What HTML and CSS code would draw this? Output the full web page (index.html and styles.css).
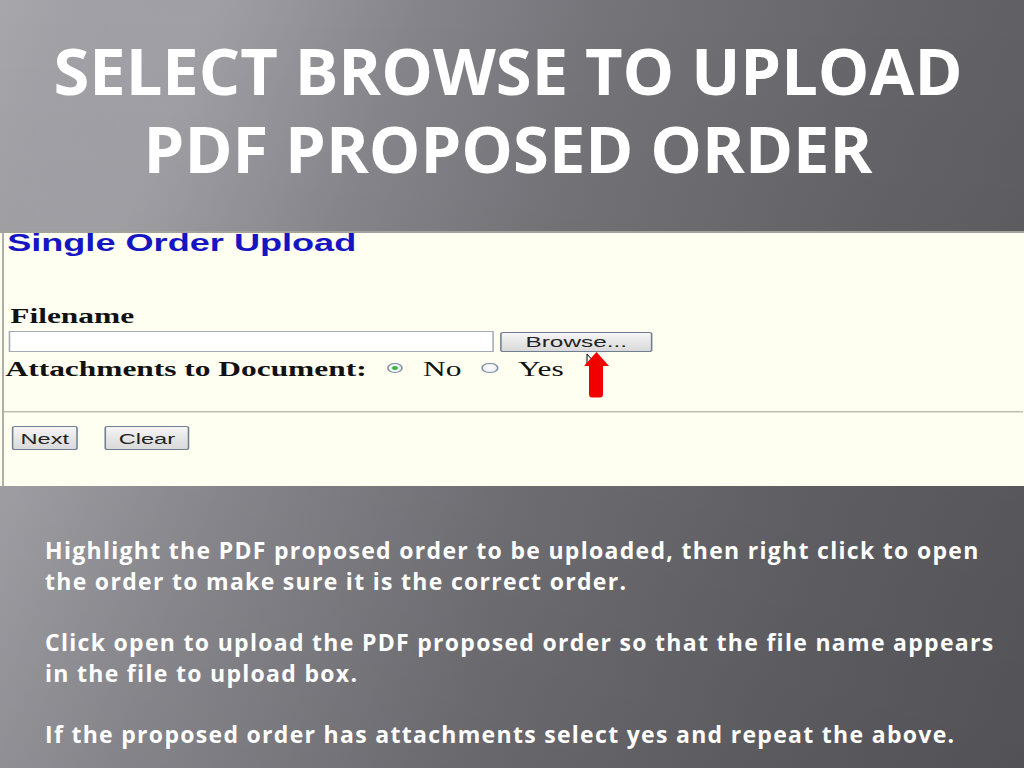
FILE: index.html
```html
<!DOCTYPE html>
<html lang="en">
<head>
<meta charset="utf-8">
<title>Select Browse to Upload PDF Proposed Order</title>
<link rel="stylesheet" href="styles.css">
</head>
<body>
<div class="slide">
  <h1 class="title"><span class="title-line">SELECT BROWSE TO UPLOAD</span><span class="title-line">PDF PROPOSED ORDER</span></h1>

  <div class="panel">
    <div class="shot">
      <div class="shot-content">
        <h2 class="form-title">Single Order Upload</h2>
        <div class="field-label">Filename</div>
        <div class="file-row"><span class="file-input"></span><span class="btn btn-browse">Browse...</span></div>
        <div class="attach-row"><span class="attach-label">Attachments to Document:</span><span class="radio radio-on"></span><span class="opt">No</span><span class="radio"></span><span class="opt">Yes</span></div>
        <div class="rule"></div>
        <div class="btn-row"><span class="btn btn-next">Next</span><span class="btn btn-clear">Clear</span></div>
      </div>
    </div>
    <svg class="cursor" width="9" height="15" viewBox="0 0 9 15"><path d="M1 1 L1 13 L4 10 L6 14 L7.5 13.3 L5.5 9.5 L8.5 9.5 Z" fill="#fff" stroke="#000" stroke-width="1"/></svg>
    <svg class="red-arrow" width="26" height="46" viewBox="0 0 26 46"><path d="M12.5 0 L25 14 L19 14 L19 42 Q19 45.5 16 45.5 L8 45.5 Q5 45.5 5 42 L5 14 L0 14 Z" fill="#f20000"/></svg>
  </div>

  <div class="notes">
    <p>Highlight the PDF proposed order to be uploaded, then right click to open the order to make sure it is the correct order.</p>
    <p>Click open to upload the PDF proposed order so that the file name appears in the file to upload box.</p>
    <p>If the proposed order has attachments select yes and repeat the above.</p>
  </div>
</div>
</body>
</html>
```
FILE: styles.css
```css
html, body {
  margin: 0;
  padding: 0;
}
body {
  width: 1024px;
  height: 768px;
  overflow: hidden;
  background:
    linear-gradient(to bottom, rgba(0,0,0,0) 0%, rgba(0,0,0,0.10) 100%),
    linear-gradient(112deg, rgba(255,255,255,0) 6%, rgba(255,255,255,0.09) 16%, rgba(255,255,255,0.04) 24%, rgba(255,255,255,0) 32%),
    linear-gradient(100deg, #a6a6ab 0%, #8f8f95 26%, #747479 52%, #646469 78%, #5b5b60 100%);
  font-family: "Open Sans", "Noto Sans", sans-serif;
}
.slide {
  display: flex;
  flex-direction: column;
  width: 1024px;
  height: 768px;
}
.slide > * {
  flex: none;
}
.title {
  display: flex;
  flex-direction: column;
  align-items: center;
  margin: 0;
  padding-top: 31px;
  padding-right: 8px;
  font-size: 65px;
  line-height: 78px;
  font-weight: 700;
  color: #ffffff;
  text-align: center;
}
.title-line {
  display: block;
  height: 78px;
}
.panel {
  position: relative;
  margin-top: 44px;
  height: 255px;
  box-sizing: border-box;
  background: #fefef1;
  border-top: 2px solid #a3a39e;
}
.shot {
  margin-left: 2px;
  height: 100%;
  border-left: 2px solid #b0b0a8;
}
.shot-content {
  width: 649px;
  transform: scaleX(1.57);
  transform-origin: 0 0;
}
.form-title {
  margin: 0;
  padding-left: 2px;
  font-family: "Liberation Sans", Arial, sans-serif;
  font-weight: 700;
  font-size: 23px;
  line-height: 20px;
  color: #1515c4;
}
.field-label {
  margin-top: 53px;
  padding-left: 4px;
  font-family: "Liberation Serif", "Times New Roman", serif;
  font-weight: 700;
  font-size: 20px;
  line-height: 20px;
  color: #111;
}
.file-row {
  display: flex;
  margin-top: 5px;
  padding-left: 3px;
}
.file-input {
  width: 309px;
  height: 21px;
  box-sizing: border-box;
  background: #fff;
  border: 1px solid #a2abb6;
}
.btn {
  display: flex;
  align-items: center;
  justify-content: center;
  box-sizing: border-box;
  font-family: "Liberation Sans", Arial, sans-serif;
  color: #222;
  background: linear-gradient(#f6f6f6, #e6e6e6 50%, #dadada);
  border: 1px solid #6f7d90;
  border-radius: 2px;
}
.btn-browse {
  margin-left: 4px;
  margin-top: 1px;
  width: 97px;
  height: 20px;
  font-size: 15.5px;
}
.attach-row {
  margin-top: 7px;
  font-family: "Liberation Serif", "Times New Roman", serif;
  font-size: 20px;
  line-height: 20px;
  color: #111;
  white-space: nowrap;
}
.attach-label {
  font-weight: 700;
  padding-left: 1px;
}
.radio {
  display: inline-block;
  width: 10.5px;
  height: 10.5px;
  box-sizing: border-box;
  margin-left: 13px;
  margin-bottom: 3px;
  vertical-align: baseline;
  border-radius: 50%;
  border: 1px solid #7e8ea2;
  background: radial-gradient(circle at 50% 40%, #ffffff, #e2e6ec);
}
.radio-on {
  background: radial-gradient(circle, #3cb54a 0 1.7px, #ffffff 2.3px, #e2e6ec);
}
.opt {
  margin-left: 12.5px;
}
.rule {
  margin-top: 32px;
  height: 2px;
  box-sizing: border-box;
  border-top: 1px solid #bcbcae;
  border-bottom: 1px solid #e2e2d6;
}
.btn-row {
  display: flex;
  margin-top: 13px;
  padding-left: 5px;
}
.btn-next {
  width: 42px;
  height: 24px;
  font-size: 15px;
}
.btn-clear {
  margin-left: 17px;
  width: 54px;
  height: 24px;
  font-size: 15px;
}
.cursor {
  position: absolute;
  left: 586px;
  top: 120px;
}
.red-arrow {
  position: absolute;
  left: 584px;
  top: 119px;
}
.notes {
  margin-top: 49px;
  padding-left: 45px;
  width: 962px;
  color: #ffffff;
  font-weight: 700;
  font-size: 23px;
  letter-spacing: 1.3px;
  line-height: 30.7px;
}
.notes p {
  margin: 0 0 30.7px 0;
}
```
